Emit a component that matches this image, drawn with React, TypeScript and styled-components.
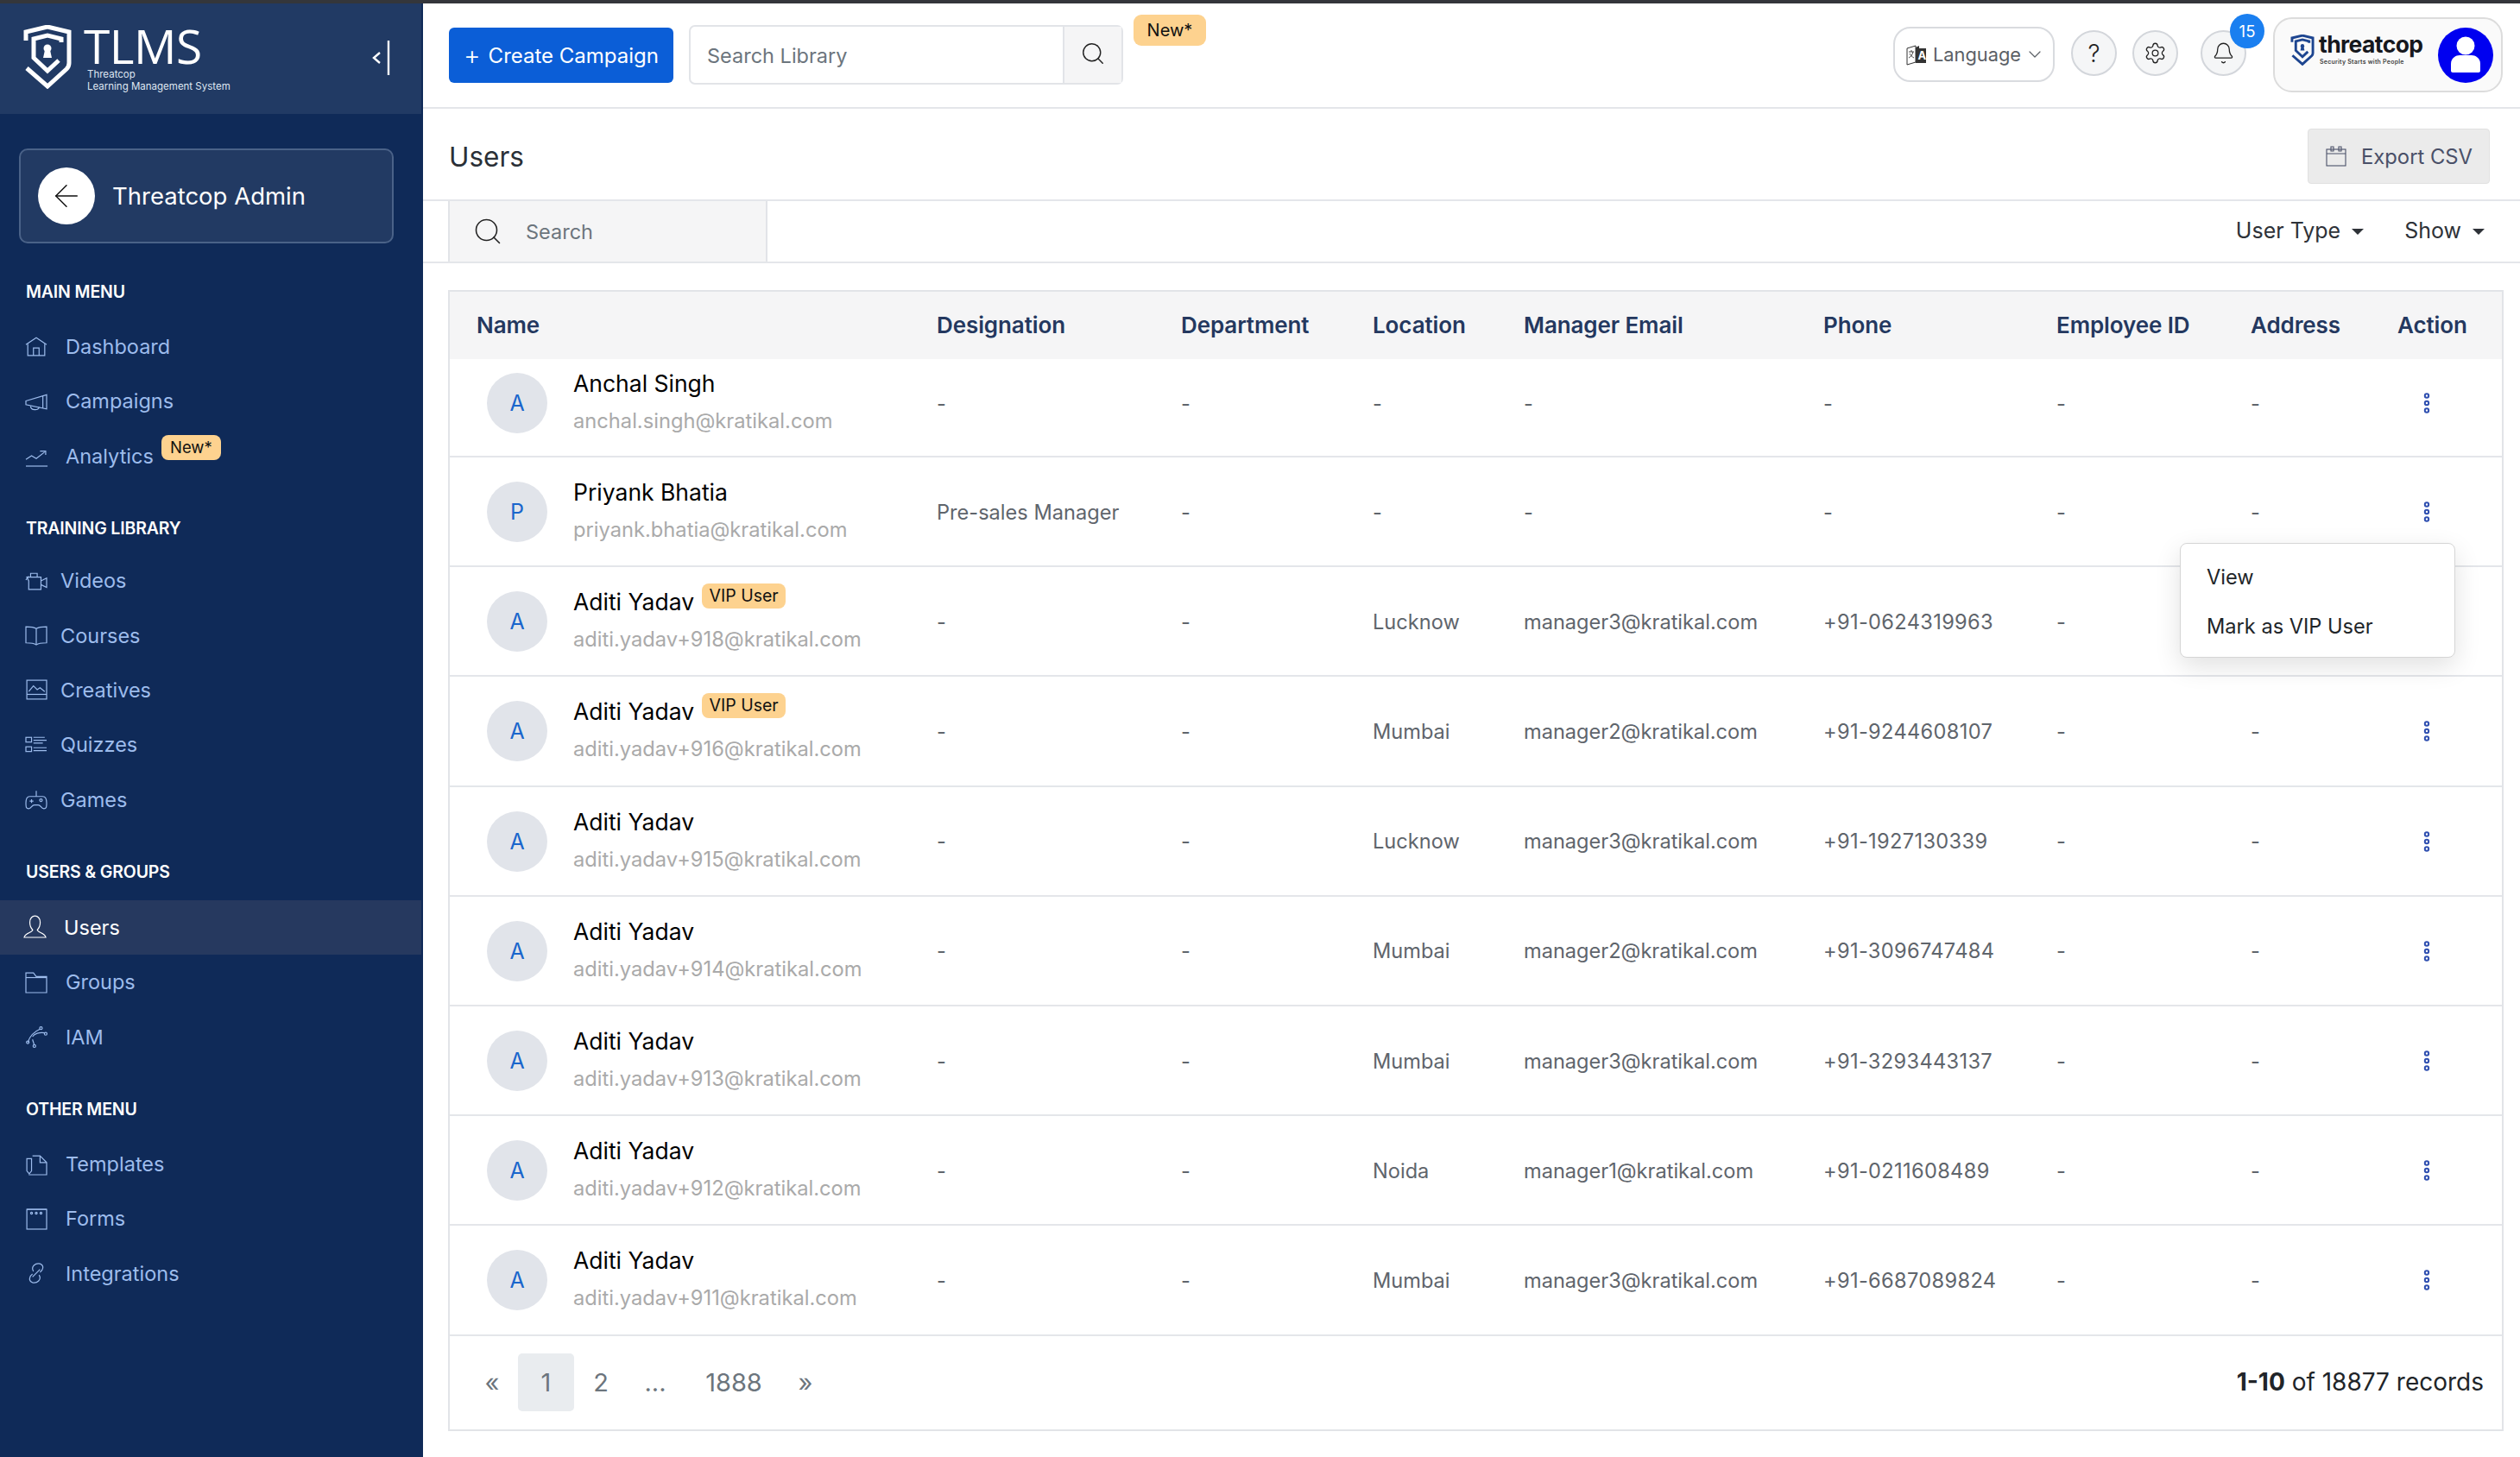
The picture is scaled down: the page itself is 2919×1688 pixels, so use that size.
import React from 'react';
import styled, { createGlobalStyle } from 'styled-components';
import { ArrowLeft, Bell, ChevronDown, Search, Settings } from 'lucide-react';

const FONT = `Inter, "Noto Sans", "Liberation Sans", sans-serif`;
const COLUMNS = '564px 283px 222px 175px 347px 270px 225px 170px 1fr';

const Global = createGlobalStyle`
  html, body { margin: 0; padding: 0; background: #fff; }
  * { box-sizing: border-box; }
  body { font-family: ${FONT}; }
`;

const Root = styled.div`
  position: relative;
  width: 2919px;
  height: 1688px;
  overflow: hidden;
  background: #fff;
  font-family: ${FONT};
`;
const TopStrip = styled.div`
  height: 4px;
  background: #34363b;
`;
const Shell = styled.div`
  display: flex;
  height: 1684px;
`;
const Sidebar = styled.aside`
  width: 490px;
  flex: none;
  background: #0f2a58;
`;
const Brand = styled.div`
  position: relative;
  width: 488px;
  height: 128px;
  background: #213a64;
  color: #fff;
`;
const BrandMark = styled.svg`
  position: absolute;
  left: 26px;
  top: 25px;
  width: 58px;
  height: 74px;
`;
const BrandName = styled.div`
  position: absolute;
  left: 97px;
  top: 24px;
  font-family: "Open Sans", sans-serif;
  font-size: 55px;
  line-height: 50px;
  letter-spacing: -0.5px;
`;
const BrandTag = styled.div`
  position: absolute;
  left: 101px;
  top: 75px;
  font-size: 11.5px;
  line-height: 14px;
  color: #dfe6f2;
`;
const Collapse = styled.svg`
  position: absolute;
  left: 428px;
  top: 42px;
  width: 26px;
  height: 42px;
`;
const AdminBox = styled.div`
  display: flex;
  align-items: center;
  gap: 20px;
  width: 434px;
  height: 110px;
  margin: 40px 0 24.5px 22px;
  padding-left: 20px;
  background: #223a63;
  border: 2px solid #4a6288;
  border-radius: 10px;
  color: #fff;
  font-size: 27.5px;
`;
const BackCircle = styled.div`
  display: flex;
  align-items: center;
  justify-content: center;
  width: 66px;
  height: 66px;
  border-radius: 50%;
  background: #fff;
  color: #111;
`;
const Section = styled.div<{ $after: number }>`
  margin-bottom: ${p => p.$after}px;
`;
const SectionLabel = styled.div<{ $h: number }>`
  height: ${p => p.$h}px;
  padding-left: 30px;
  line-height: 63.3px;
  color: #fff;
  font-size: 19.5px;
  font-weight: 600;
  letter-spacing: -0.15px;
`;
const NavItem = styled.div<{ $active?: boolean; $gap?: number }>`
  display: flex;
  align-items: center;
  width: 488px;
  height: 63.3px;
  padding-left: ${p => (p.$active ? 28 : 30)}px;
  gap: ${p => p.$gap ?? 22}px;
  font-size: 23.5px;
  color: ${p => (p.$active ? '#fff' : '#9dbcec')};
  background: ${p => (p.$active ? '#26395f' : 'transparent')};
`;
const NavIcon = styled.svg`
  width: 24px;
  height: 24px;
  flex: none;
  fill: none;
  stroke: currentColor;
  stroke-width: 1.1;
  overflow: visible;
`;
const AmberBadge = styled.span`
  display: inline-flex;
  align-items: center;
  justify-content: center;
  background: #fdd28f;
  color: #111;
  font-weight: 400;
`;
const NavBadge = styled(AmberBadge)`
  width: 69px;
  height: 29px;
  margin: -20px 0 0 -13px;
  border-radius: 8px;
  font-size: 18.5px;
`;
const Main = styled.main`
  flex: 1;
  min-width: 0;
`;
const Topbar = styled.header`
  position: relative;
  display: flex;
  align-items: flex-start;
  height: 122px;
  border-bottom: 2px solid #e4e6ea;
`;
const CreateButton = styled.div`
  display: flex;
  align-items: center;
  justify-content: center;
  gap: 9px;
  width: 260px;
  height: 64px;
  margin: 28px 0 0 30px;
  background: #0b5ed7;
  border-radius: 6px;
  color: #fff;
  font-size: 24px;
`;
const PlusMark = styled.span`
  font-size: 30px;
  font-weight: 300;
  line-height: 30px;
`;
const LibrarySearch = styled.div`
  display: flex;
  width: 503px;
  height: 69px;
  margin: 25px 0 0 18px;
  border: 2px solid #e2e4e8;
  border-radius: 7px;
`;
const LibraryInput = styled.div`
  flex: 1;
  padding-left: 19px;
  line-height: 67px;
  font-size: 23.5px;
  color: #6c757d;
`;
const LibraryButton = styled.div`
  display: flex;
  align-items: center;
  justify-content: center;
  width: 68px;
  padding-bottom: 4px;
  background: #f5f5f6;
  border-left: 2px solid #e2e4e8;
  color: #222;
`;
const TopNewBadge = styled(AmberBadge)`
  width: 84px;
  height: 36px;
  margin: 13px 0 0 12px;
  border-radius: 9px;
  font-size: 20px;
`;
const LanguagePill = styled.div`
  position: absolute;
  left: 1703px;
  top: 27px;
  display: flex;
  align-items: center;
  width: 187px;
  height: 64px;
  padding-left: 11px;
  border: 2px solid #d9dbdf;
  border-radius: 20px;
  color: #5b6066;
  font-size: 21.8px;
`;
const LanguageIcon = styled.svg`
  width: 27px;
  height: 27px;
  flex: none;
  margin-right: 6px;
`;
const RoundButton = styled.div<{ $x: number }>`
  position: absolute;
  left: ${p => p.$x - 490}px;
  top: 31px;
  display: flex;
  align-items: center;
  justify-content: center;
  width: 53px;
  height: 53px;
  background: #f5f6f7;
  border: 2px solid #d3d6db;
  border-radius: 50%;
  color: #222;
  font-size: 28px;
  font-weight: 300;
`;
const CountBadge = styled.div`
  position: absolute;
  left: 2093px;
  top: 12px;
  z-index: 2;
  display: flex;
  align-items: center;
  justify-content: center;
  width: 40px;
  height: 40px;
  background: #1a7ff0;
  border-radius: 50%;
  color: #fff;
  font-size: 18.5px;
`;
const ProfileBox = styled.div`
  position: absolute;
  left: 2143px;
  top: 16px;
  width: 266px;
  height: 87px;
  background: #fafafa;
  border: 2px solid #dcdcdc;
  border-radius: 22px;
`;
const OrgMark = styled.svg`
  position: absolute;
  left: 18px;
  top: 18px;
  width: 28px;
  height: 36px;
`;
const OrgName = styled.div`
  position: absolute;
  left: 51px;
  top: 14px;
  color: #16181d;
  font-size: 26.5px;
  font-weight: 700;
  line-height: 30px;
  letter-spacing: -0.6px;
`;
const OrgTag = styled.div`
  position: absolute;
  left: 52px;
  top: 45px;
  color: #444;
  font-size: 7px;
  line-height: 10px;
  font-weight: 600;
  letter-spacing: 0.22px;
  white-space: nowrap;
`;
const AvatarCircle = styled.svg`
  position: absolute;
  left: 189px;
  top: 10px;
  width: 64px;
  height: 64px;
`;
const TitleRow = styled.div`
  display: flex;
  align-items: center;
  justify-content: space-between;
  height: 107px;
  padding: 5px 35px 0 30px;
  border-bottom: 2px solid #e4e6ea;
`;
const Title = styled.h1`
  margin: 0;
  color: #2b3037;
  font-size: 31.5px;
  font-weight: 400;
`;
const ExportButton = styled.div`
  display: flex;
  align-items: center;
  gap: 17px;
  width: 211px;
  height: 64px;
  padding-left: 20px;
  background: #ebebeb;
  border: 1px solid #e1e1e1;
  border-radius: 4px;
  color: #4a5068;
  font-size: 23.8px;
`;
const FilterRow = styled.div`
  display: flex;
  align-items: stretch;
  height: 72px;
  border-bottom: 2px solid #e4e6ea;
`;
const FilterSearch = styled.div`
  display: flex;
  align-items: center;
  width: 370px;
  margin-left: 29px;
  padding-left: 26px;
  gap: 26px;
  background: #f5f5f6;
  border-left: 2px solid #e2e4e8;
  border-right: 2px solid #e2e4e8;
  color: #6c757d;
  font-size: 23.5px;
`;
const FilterMenu = styled.div<{ $first?: boolean }>`
  display: flex;
  align-items: center;
  margin-left: ${p => (p.$first ? 'auto' : '47px')};
  padding-bottom: 2px;
  gap: 13px;
  color: #2e3238;
  font-size: 25px;
  &:last-child { margin-right: 41px; }
`;
const Caret = styled.span`
  width: 0;
  height: 0;
  margin-top: 2px;
  border-left: 7px solid transparent;
  border-right: 7px solid transparent;
  border-top: 7px solid #2e3238;
`;
const Card = styled.section`
  width: 2381px;
  height: 1322px;
  margin: 31px 0 0 29px;
  border: 2px solid #e2e4e8;
`;
const Head = styled.div`
  display: grid;
  grid-template-columns: ${COLUMNS};
  align-items: center;
  height: 78px;
  padding-bottom: 1px;
  background: #f5f5f6;
  color: #24385f;
  font-size: 26px;
  font-weight: 600;
  letter-spacing: -0.1px;
`;
const HeadCell = styled.div<{ $first?: boolean }>`
  padding-left: ${p => (p.$first ? 31 : 0)}px;
`;
const Row = styled.div`
  display: grid;
  grid-template-columns: ${COLUMNS};
  align-items: center;
  height: 127.2px;
  padding-top: 1px;
  border-bottom: 2px solid #e4e6ea;
  color: #5f656c;
  font-size: 23.6px;
  &:nth-child(2) { height: 114px; padding-bottom: 11px; }
`;
const UserCell = styled.div`
  display: flex;
  align-items: center;
  gap: 30px;
  padding-left: 43px;
`;
const Avatar = styled.div`
  display: flex;
  align-items: center;
  justify-content: center;
  width: 70px;
  height: 70px;
  background: #e1e4ea;
  border-radius: 50%;
  color: #1a66cc;
  font-size: 25px;
`;
const UserText = styled.div`
  position: relative;
  top: -1px;
`;
const UserName = styled.div`
  display: flex;
  align-items: center;
  height: 44px;
  color: #000;
  font-size: 26.5px;
`;
const UserEmail = styled.div`
  height: 44px;
  line-height: 44px;
  color: #aaa;
  font-size: 23.7px;
`;
const VipBadge = styled(AmberBadge)`
  width: 97px;
  height: 29px;
  margin: 0 0 14px 9px;
  border-radius: 8px;
  font-size: 19.5px;
`;
const PhoneCell = styled.div`
  letter-spacing: 0.35px;
`;
const ActionCell = styled.div`
  display: flex;
  justify-content: center;
  width: 68px;
`;
const Dots = styled.svg`
  width: 8px;
  height: 24px;
  fill: none;
  stroke: #2f4fb0;
  stroke-width: 2;
`;
const Footer = styled.div`
  display: flex;
  align-items: center;
  height: 107px;
  padding: 0 21px 0 0;
  color: #6c757d;
  font-size: 29px;
`;
const Page = styled.div<{ $active?: boolean; $w: number; $inset?: number }>`
  display: flex;
  align-items: center;
  justify-content: center;
  width: ${p => p.$w}px;
  height: 67px;
  padding-left: ${p => p.$inset ?? 0}px;
  background: ${p => (p.$active ? '#e9ecef' : 'transparent')};
  border-radius: 5px;
`;
const Records = styled.div`
  margin-left: auto;
  color: #212529;
  font-size: 28px;
  b { font-weight: 700; }
`;
const Dropdown = styled.div`
  position: absolute;
  left: 2525px;
  top: 629px;
  z-index: 5;
  width: 319px;
  height: 133px;
  padding: 11px 0 0 30px;
  background: #fff;
  border: 1px solid #d5d5d5;
  border-radius: 8px;
  box-shadow: 0 10px 30px rgba(0, 0, 0, 0.12);
  color: #212529;
  font-size: 23.6px;
`;
const DropdownItem = styled.div`
  height: 56.5px;
  line-height: 56.5px;
`;

const Shield = ({ color, sw = 5 }: { color: string; sw?: number }) => (
  <>
    <path d="M4 18V8L29 2l25 6v36c0 3-1 5-3 7L29 71 5 50" fill="none" stroke={color} strokeWidth={sw} />
    <path d="M45 20V16L29 12 13 16V38L29 53 42 41" fill="none" stroke={color} strokeWidth={sw} />
    <circle cx="29" cy="27" r="4.5" fill={color} />
    <path d="M26 29h6l2 9H24z" fill={color} />
  </>
);

const icons: Record<string, React.ReactNode> = {
  home: <><path d="M1 10.5 12 3l11 7.5" /><path d="M3 9.5V22h18V9.5" /><path d="M9 22v-8h6v8" /></>,
  megaphone: <><path d="M1 11.5 23 5v15L1 15.5z" /><path d="M19 6v13" /><path d="M6 17c0 5 9 5 9 1" /></>,
  analytics: <><path d="M1 23h23" /><path d="M1 16l6-4 5 3 9-7" /><path d="M16 7h6v4" /></>,
  video: <><path d="M2 8h15v13H4V12z" /><path d="M1 11l3-4" /><path d="M6 8V4h7v4" /><path d="M17 12l6-3v10l-6-3" /></>,
  book: <><path d="M12 5C9 3 5 3 1 3v17c4 0 8 0 11 2 3-2 7-2 11-2V3c-4 0-8 0-11 2z" /><path d="M12 5v17" /></>,
  image: <><rect x="2" y="2" width="21" height="20" /><path d="M2 17h21" /><path d="M4 14l5-6 4 4 3-2 5 4" /></>,
  quiz: <><rect x="1" y="4" width="6" height="5" /><rect x="1" y="14" width="6" height="5" /><path d="M9 4h12M9 7h14M9 10h10M9 15h14M9 18h14" /></>,
  game: <><path d="M5 9h14c3 0 4 3 4 7s0 6-3 6-3-4-6-4H10c-3 0-3 4-6 4s-3-2-3-6 1-7 4-7z" /><path d="M12 9V3" /><path d="M5 14h4M7 12v4" /><circle cx="17" cy="13" r="1.4" /></>,
  user: <><path d="M7 7c0-9 11-9 11 0 0 4-2 7-3 8 0 3 8 3 9 8H1c1-5 9-5 9-8-1-1-3-4-3-8z" /></>,
  folder: <><path d="M1 2h8l3 4h11v17H1z" /><path d="M1 7h22" /></>,
  iam: <><path d="M3 18c2-6 6-11 13-14" /><path d="M8 12c2-3 7-5 13-4" /><path d="M8 15l2 6" /><circle cx="3" cy="18" r="1.4" /><circle cx="17" cy="3" r="1.4" /><circle cx="22" cy="9" r="1.4" /><circle cx="10" cy="22" r="1.4" /></>,
  template: <><path d="M8 3h8l7 7v13H4" /><path d="M16 3v7h7" /><path d="M2 6h5v13l-2.5 3L2 19z" /></>,
  forms: <><rect x="2" y="2" width="21" height="21" /><circle cx="7" cy="6" r="1" /><circle cx="12" cy="6" r="1" /><circle cx="17" cy="6" r="1" /><path d="M2 2h21" /></>,
  link: <><path d="M9 10c-3-5 2-9 7-8 5 2 3 7 0 9" /><path d="M15 14c3 5-2 9-7 8-5-2-3-7 0-9" /><path d="M8 16l8-8" /></>,
};

type Item = { label: string; icon: string; gap?: number; active?: boolean; badge?: boolean };
const menu: { title: string; labelH: number; after: number; items: Item[] }[] = [
  { title: 'MAIN MENU', labelH: 63.3, after: 21, items: [
    { label: 'Dashboard', icon: 'home' },
    { label: 'Campaigns', icon: 'megaphone' },
    { label: 'Analytics', icon: 'analytics', badge: true },
  ] },
  { title: 'TRAINING LIBRARY', labelH: 60.5, after: 21.8, items: [
    { label: 'Videos', icon: 'video', gap: 16 },
    { label: 'Courses', icon: 'book', gap: 16 },
    { label: 'Creatives', icon: 'image', gap: 16 },
    { label: 'Quizzes', icon: 'quiz', gap: 16 },
    { label: 'Games', icon: 'game', gap: 16 },
  ] },
  { title: 'USERS & GROUPS', labelH: 63.3, after: 21, items: [
    { label: 'Users', icon: 'user', active: true },
    { label: 'Groups', icon: 'folder' },
    { label: 'IAM', icon: 'iam' },
  ] },
  { title: 'OTHER MENU', labelH: 63.3, after: 0, items: [
    { label: 'Templates', icon: 'template' },
    { label: 'Forms', icon: 'forms' },
    { label: 'Integrations', icon: 'link' },
  ] },
];

const headers = ['Name', 'Designation', 'Department', 'Location', 'Manager Email', 'Phone', 'Employee ID', 'Address', 'Action'];

type UserRow = { name: string; email: string; role?: string; loc?: string; mgr?: string; phone?: string; vip?: boolean; covered?: boolean };
const rows: UserRow[] = [
  { name: 'Anchal Singh', email: 'anchal.singh@kratikal.com' },
  { name: 'Priyank Bhatia', email: 'priyank.bhatia@kratikal.com', role: 'Pre-sales Manager' },
  { name: 'Aditi Yadav', email: 'aditi.yadav+918@kratikal.com', loc: 'Lucknow', mgr: 'manager3@kratikal.com', phone: '+91-0624319963', vip: true, covered: true },
  { name: 'Aditi Yadav', email: 'aditi.yadav+916@kratikal.com', loc: 'Mumbai', mgr: 'manager2@kratikal.com', phone: '+91-9244608107', vip: true },
  { name: 'Aditi Yadav', email: 'aditi.yadav+915@kratikal.com', loc: 'Lucknow', mgr: 'manager3@kratikal.com', phone: '+91-1927130339' },
  { name: 'Aditi Yadav', email: 'aditi.yadav+914@kratikal.com', loc: 'Mumbai', mgr: 'manager2@kratikal.com', phone: '+91-3096747484' },
  { name: 'Aditi Yadav', email: 'aditi.yadav+913@kratikal.com', loc: 'Mumbai', mgr: 'manager3@kratikal.com', phone: '+91-3293443137' },
  { name: 'Aditi Yadav', email: 'aditi.yadav+912@kratikal.com', loc: 'Noida', mgr: 'manager1@kratikal.com', phone: '+91-0211608489' },
  { name: 'Aditi Yadav', email: 'aditi.yadav+911@kratikal.com', loc: 'Mumbai', mgr: 'manager3@kratikal.com', phone: '+91-6687089824' },
];

export default function App() {
  return (
    <Root>
      <Global />
      <TopStrip />
      <Shell>
        <Sidebar>
          <Brand>
            <BrandMark viewBox="0 0 58 74"><Shield color="#fff" /></BrandMark>
            <BrandName>TLMS</BrandName>
            <BrandTag>Threatcop<br />Learning Management System</BrandTag>
            <Collapse viewBox="0 0 26 42" fill="none" stroke="#fff">
              <path d="M12 15l-7 6 7 6" strokeWidth="2.4" />
              <path d="M22 1v40" strokeWidth="2.4" />
            </Collapse>
          </Brand>
          <AdminBox>
            <BackCircle><ArrowLeft size={42} strokeWidth={0.85} /></BackCircle>
            Threatcop Admin
          </AdminBox>
          {menu.map(section => (
            <Section key={section.title} $after={section.after}>
              <SectionLabel $h={section.labelH}>{section.title}</SectionLabel>
              {section.items.map(item => (
                <NavItem key={item.label} $active={item.active} $gap={item.gap}>
                  <NavIcon viewBox="1 1 22 22">{icons[item.icon]}</NavIcon>
                  {item.label}
                  {item.badge && <NavBadge>New*</NavBadge>}
                </NavItem>
              ))}
            </Section>
          ))}
        </Sidebar>
        <Main>
          <Topbar>
            <CreateButton><PlusMark>+</PlusMark>Create Campaign</CreateButton>
            <LibrarySearch>
              <LibraryInput>Search Library</LibraryInput>
              <LibraryButton><Search size={30} strokeWidth={1.15} /></LibraryButton>
            </LibrarySearch>
            <TopNewBadge>New*</TopNewBadge>
            <LanguagePill>
              <LanguageIcon viewBox="0 0 27 27">
                <path d="M3 6l10-3v19l-10 3z" fill="#fff" stroke="#333" />
                <path d="M13 5l4-2v3h8v17H13z" fill="#333" />
                <text x="15.5" y="19" fontSize="13" fontWeight="700" fill="#fff">A</text>
                <path d="M5 10h6M8 8v2M10 10c-1 4-3 6-5 7M6 12c1 2 3 4 5 5" fill="none" stroke="#333" strokeWidth="0.9" />
              </LanguageIcon>
              Language
              <ChevronDown size={24} strokeWidth={1.2} style={{ marginLeft: 4 }} />
            </LanguagePill>
            <RoundButton $x={2399}>?</RoundButton>
            <RoundButton $x={2470}><Settings size={27} strokeWidth={1.15} /></RoundButton>
            <RoundButton $x={2549}><Bell size={27} strokeWidth={1.15} /></RoundButton>
            <CountBadge>15</CountBadge>
            <ProfileBox>
              <OrgMark viewBox="0 0 58 74"><Shield color="#1d4590" sw={6} /></OrgMark>
              <OrgName>threatcop</OrgName>
              <OrgTag>Security Starts with People</OrgTag>
              <AvatarCircle viewBox="0 0 64 64">
                <circle cx="32" cy="32" r="32" fill="#0000f0" />
                <circle cx="32" cy="21" r="10.5" fill="#fff" />
                <path d="M15 50V42c0-7 6-10 10-10h14c4 0 10 3 10 10v8c0 1-1 2-2 2H17c-1 0-2-1-2-2z" fill="#fff" />
              </AvatarCircle>
            </ProfileBox>
          </Topbar>
          <TitleRow>
            <Title>Users</Title>
            <ExportButton>
              <NavIcon viewBox="0 0 24 24" style={{ stroke: '#4a5068' }}>
                <rect x="1" y="4" width="22" height="19" />
                <path d="M1 9h22M6 1v5h3V1zM15 1v5h3V1z" />
              </NavIcon>
              Export CSV
            </ExportButton>
          </TitleRow>
          <FilterRow>
            <FilterSearch><Search size={36} strokeWidth={1.05} color="#222" />Search</FilterSearch>
            <FilterMenu $first>User Type <Caret /></FilterMenu>
            <FilterMenu>Show <Caret /></FilterMenu>
          </FilterRow>
          <Card>
            <Head>
              {headers.map((h, i) => <HeadCell key={h} $first={i === 0}>{h}</HeadCell>)}
            </Head>
            {rows.map(row => (
              <Row key={row.email}>
                <UserCell>
                  <Avatar>{row.name[0]}</Avatar>
                  <UserText>
                    <UserName>{row.name}{row.vip && <VipBadge>VIP User</VipBadge>}</UserName>
                    <UserEmail>{row.email}</UserEmail>
                  </UserText>
                </UserCell>
                <div>{row.role ?? '-'}</div>
                <div>-</div>
                <div>{row.loc ?? '-'}</div>
                <div>{row.mgr ?? '-'}</div>
                <PhoneCell>{row.phone ?? '-'}</PhoneCell>
                <div>-</div>
                <div>{row.covered ? '' : '-'}</div>
                <ActionCell>
                  {!row.covered && (
                    <Dots viewBox="0 0 8 24"><circle cx="4" cy="3.5" r="2.2" /><circle cx="4" cy="12" r="2.2" /><circle cx="4" cy="20.5" r="2.2" /></Dots>
                  )}
                </ActionCell>
              </Row>
            ))}
            <Footer>
              <Page $w={79} $inset={19}>«</Page>
              <Page $w={65} $active>1</Page>
              <Page $w={62}>2</Page>
              <Page $w={64}>...</Page>
              <Page $w={118}>1888</Page>
              <Page $w={48}>»</Page>
              <Records><b>1-10</b> of 18877 records</Records>
            </Footer>
          </Card>
        </Main>
      </Shell>
      <Dropdown>
        <DropdownItem>View</DropdownItem>
        <DropdownItem>Mark as VIP User</DropdownItem>
      </Dropdown>
    </Root>
  );
}
